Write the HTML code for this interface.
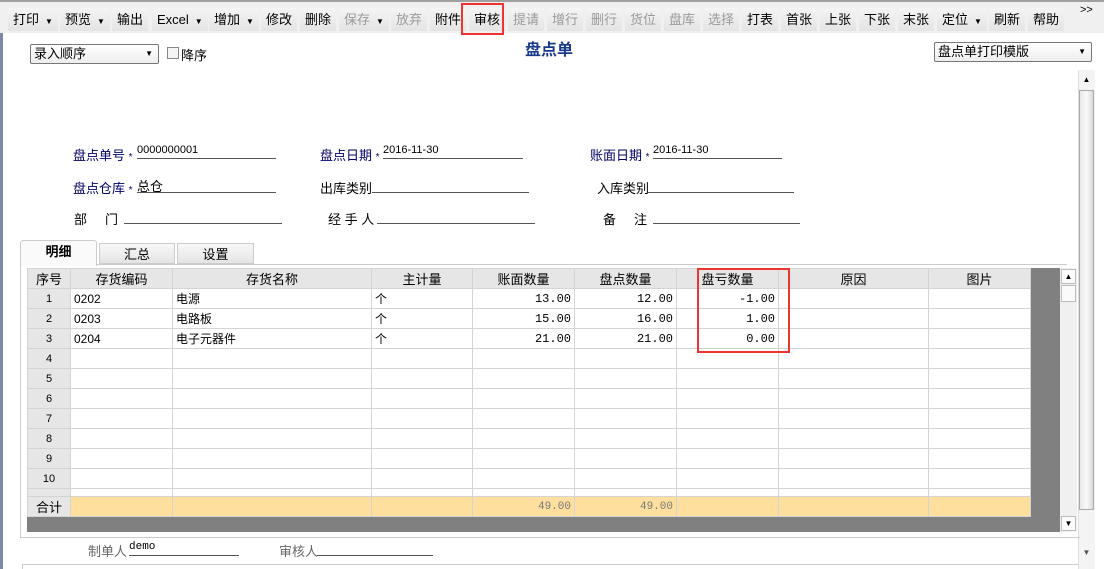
<!DOCTYPE html>
<html><head><meta charset="utf-8"><style>
*{margin:0;padding:0;box-sizing:border-box}
body{width:1104px;height:569px;overflow:hidden;background:#fff;font-family:"Liberation Sans","Noto Sans CJK SC",sans-serif;font-size:12px;color:#000;position:relative}
.a{position:absolute;white-space:nowrap}
#tb{position:absolute;left:0;top:0;width:1104px;height:33px;background:#f0f0f0;border-top:2px solid #a0a0a0}
.b{position:absolute;top:6px;height:23px;line-height:23px;font-size:13px;background:linear-gradient(#f4f4f4,#e4e4e4);padding:0 5px}
.g{color:#999}
.ar{font-size:8px;margin-left:6px}
.lbl{color:#000066}
.ln{position:absolute;border-bottom:1px solid #555;height:1px}
table{border-collapse:collapse;position:absolute;left:27px;top:268px;table-layout:fixed}
td{height:20px;border:1px solid #d4d4d4;font-size:12px;padding:0 3px;white-space:nowrap;overflow:hidden;background:#fff}
tr.h td{background:#e6e6e6;text-align:center;font-size:13px}
tr.t td{height:8px;line-height:8px;font-size:1px}
td.s{background:#e6e6e6;text-align:center;font-size:11px}
td.r{text-align:right;font-family:"Liberation Mono",monospace}
tr.sum td{background:#ffdf9e}
tr.sum td.s{background:#e6e6e6}
</style></head><body>
<div style="position:absolute;left:0;top:0;width:3px;height:569px;background:#7a8aa8"></div>
<div id="tb">
<div class="b" style="left:8px">打印<span class="ar">▼</span></div>
<div class="b" style="left:60px">预览<span class="ar">▼</span></div>
<div class="b" style="left:112px">输出</div>
<div class="b" style="left:152px">Excel<span class="ar">▼</span></div>
<div class="b" style="left:209px">增加<span class="ar">▼</span></div>
<div class="b" style="left:261px">修改</div>
<div class="b" style="left:300px">删除</div>
<div class="b g" style="left:339px">保存<span class="ar" style="color:#000">▼</span></div>
<div class="b g" style="left:391px">放弃</div>
<div class="b" style="left:430px">附件</div>
<div class="b" style="left:469px">审核</div>
<div class="b g" style="left:508px">提请</div>
<div class="b g" style="left:547px">增行</div>
<div class="b g" style="left:586px">删行</div>
<div class="b g" style="left:625px">货位</div>
<div class="b g" style="left:664px">盘库</div>
<div class="b g" style="left:703px">选择</div>
<div class="b" style="left:742px">打表</div>
<div class="b" style="left:781px">首张</div>
<div class="b" style="left:820px">上张</div>
<div class="b" style="left:859px">下张</div>
<div class="b" style="left:898px">末张</div>
<div class="b" style="left:937px">定位<span class="ar">▼</span></div>
<div class="b" style="left:989px">刷新</div>
<div class="b" style="left:1028px">帮助</div>
<div class="a" style="left:1080px;top:2px;font-size:11px">&gt;&gt;</div>
</div>
<div style="position:absolute;left:461px;top:3px;width:43px;height:32px;border:2px solid #ee3333"></div>

<div class="a" style="left:30px;top:44px;width:129px;height:20px;border:1px solid #777;border-radius:2px;background:linear-gradient(#fff,#eee);font-size:13px;line-height:18px;padding-left:3px">录入顺序<span style="position:absolute;right:5px;font-size:8px">▼</span></div>
<div class="a" style="left:167px;top:47px;width:12px;height:12px;border:1px solid #888;background:#f4f4f4"></div>
<div class="a" style="left:181px;top:45px;font-size:13px">降序</div>
<div class="a" style="left:525px;top:36px;font-size:16px;font-weight:bold;color:#1a3a8a">盘点单</div>
<div class="a" style="left:934px;top:42px;width:158px;height:20px;border:1px solid #777;border-radius:2px;background:linear-gradient(#fff,#eee);font-size:13px;line-height:18px;padding-left:3px">盘点单打印模版<span style="position:absolute;right:5px;font-size:8px">▼</span></div>

<div class="a" style="left:1078px;top:70px;width:17px;height:499px;background:#f4f4f4;border-left:1px solid #ddd"></div>
<div class="a" style="left:1079px;top:72px;width:15px;height:16px;font-size:8px;text-align:center;line-height:16px">▲</div>
<div class="a" style="left:1079px;top:90px;width:15px;height:420px;background:linear-gradient(90deg,#e8e8e8,#fafafa,#d8d8d8);border:1px solid #aaa"></div>
<div class="a" style="left:1079px;top:545px;width:15px;height:16px;font-size:8px;text-align:center;line-height:16px;color:#555">▼</div>

<div class="a lbl" style="left:73px;top:145px;font-size:13px">盘点单号 <span style="font-size:10px">*</span></div>
<div class="a" style="left:137px;top:144px;font-size:11px">0000000001</div><div class="ln" style="left:137px;top:158px;width:139px"></div>
<div class="a lbl" style="left:320px;top:145px;font-size:13px">盘点日期 <span style="font-size:10px">*</span></div>
<div class="a" style="left:383px;top:144px;font-size:11px">2016-11-30</div><div class="ln" style="left:383px;top:158px;width:140px"></div>
<div class="a lbl" style="left:590px;top:145px;font-size:13px">账面日期 <span style="font-size:10px">*</span></div>
<div class="a" style="left:653px;top:144px;font-size:11px">2016-11-30</div><div class="ln" style="left:653px;top:158px;width:129px"></div>
<div class="a lbl" style="left:73px;top:178px;font-size:13px">盘点仓库 <span style="font-size:10px">*</span></div>
<div class="a" style="left:137px;top:176px;font-size:13px">总仓</div><div class="ln" style="left:137px;top:192px;width:139px"></div>
<div class="a" style="left:320px;top:178px;font-size:13px">出库类别</div><div class="ln" style="left:372px;top:192px;width:157px"></div>
<div class="a" style="left:597px;top:178px;font-size:13px">入库类别</div><div class="ln" style="left:648px;top:192px;width:146px"></div>
<div class="a" style="left:74px;top:209px;font-size:13px">部&nbsp;&nbsp;&nbsp;&nbsp;&nbsp;门</div><div class="ln" style="left:124px;top:223px;width:158px"></div>
<div class="a" style="left:328px;top:209px;font-size:13px">经 手 人</div><div class="ln" style="left:377px;top:223px;width:158px"></div>
<div class="a" style="left:603px;top:209px;font-size:13px">备&nbsp;&nbsp;&nbsp;&nbsp;&nbsp;注</div><div class="ln" style="left:653px;top:223px;width:147px"></div>

<div class="a" style="left:20px;top:264px;width:1047px;height:1px;background:#ccc"></div>
<div class="a" style="left:20px;top:240px;width:77px;height:26px;background:#fafafa;border:1px solid #ccc;border-bottom:none;border-radius:3px 3px 0 0;text-align:center;line-height:22px;font-weight:bold;font-size:13px">明细</div>
<div class="a" style="left:99px;top:243px;width:76px;height:21px;background:linear-gradient(#f8f8f8,#e4e4e4);border:1px solid #ccc;text-align:center;line-height:22px;font-size:13px">汇总</div>
<div class="a" style="left:177px;top:243px;width:77px;height:21px;background:linear-gradient(#f8f8f8,#e4e4e4);border:1px solid #ccc;text-align:center;line-height:22px;font-size:13px">设置</div>
<div class="a" style="left:20px;top:264px;width:1px;height:274px;background:#ccc"></div>
<div class="a" style="left:20px;top:537px;width:1060px;height:1px;background:#ccc"></div>

<div class="a" style="left:27px;top:268px;width:1033px;height:264px;background:#808080"></div>
<table>
<colgroup><col style="width:43px"><col style="width:102px"><col style="width:199px"><col style="width:101px"><col style="width:102px"><col style="width:102px"><col style="width:102px"><col style="width:150px"><col style="width:102px"></colgroup>
<tr class="h"><td>序号</td><td>存货编码</td><td>存货名称</td><td>主计量</td><td>账面数量</td><td>盘点数量</td><td>盘亏数量</td><td>原因</td><td>图片</td></tr>
<tr><td class="s">1</td><td>0202</td><td>电源</td><td>个</td><td class="r">13.00</td><td class="r">12.00</td><td class="r">-1.00</td><td></td><td></td></tr>
<tr><td class="s">2</td><td>0203</td><td>电路板</td><td>个</td><td class="r">15.00</td><td class="r">16.00</td><td class="r">1.00</td><td></td><td></td></tr>
<tr><td class="s">3</td><td>0204</td><td>电子元器件</td><td>个</td><td class="r">21.00</td><td class="r">21.00</td><td class="r">0.00</td><td></td><td></td></tr>
<tr><td class="s">4</td><td></td><td></td><td></td><td></td><td></td><td></td><td></td><td></td></tr>
<tr><td class="s">5</td><td></td><td></td><td></td><td></td><td></td><td></td><td></td><td></td></tr>
<tr><td class="s">6</td><td></td><td></td><td></td><td></td><td></td><td></td><td></td><td></td></tr>
<tr><td class="s">7</td><td></td><td></td><td></td><td></td><td></td><td></td><td></td><td></td></tr>
<tr><td class="s">8</td><td></td><td></td><td></td><td></td><td></td><td></td><td></td><td></td></tr>
<tr><td class="s">9</td><td></td><td></td><td></td><td></td><td></td><td></td><td></td><td></td></tr>
<tr><td class="s">10</td><td></td><td></td><td></td><td></td><td></td><td></td><td></td><td></td></tr>
<tr class="t"><td class="s"></td><td></td><td></td><td></td><td></td><td></td><td></td><td></td><td></td></tr>
<tr class="sum"><td class="s" style="font-size:13px">合计</td><td></td><td></td><td></td><td class="r" style="color:#777;font-size:11px">49.00</td><td class="r" style="color:#777;font-size:11px">49.00</td><td></td><td></td><td></td></tr>
</table>
<div style="position:absolute;left:697px;top:268px;width:93px;height:85px;border:2px solid #ee3333"></div>
<div class="a" style="left:1060px;top:268px;width:17px;height:264px;background:#f0f0f0"></div>
<div class="a" style="left:1061px;top:269px;width:15px;height:15px;background:#fafafa;border:1px solid #bbb;font-size:8px;text-align:center;line-height:14px">▲</div>
<div class="a" style="left:1061px;top:285px;width:15px;height:17px;background:#fafafa;border:1px solid #bbb"></div>
<div class="a" style="left:1061px;top:516px;width:15px;height:15px;background:#fafafa;border:1px solid #bbb;font-size:8px;text-align:center;line-height:14px">▼</div>

<div class="a" style="left:88px;top:541px;font-size:13px;color:#666">制单人</div>
<div class="a" style="left:129px;top:541px;font-size:11px;font-family:'Liberation Mono',monospace">demo</div><div class="ln" style="left:129px;top:555px;width:110px"></div>
<div class="a" style="left:279px;top:541px;font-size:13px;color:#666">审核人</div><div class="ln" style="left:317px;top:555px;width:116px"></div>
<div class="a" style="left:22px;top:564px;width:1056px;height:5px;border-top:1px solid #ccc;border-left:1px solid #ccc"></div>
</body></html>
